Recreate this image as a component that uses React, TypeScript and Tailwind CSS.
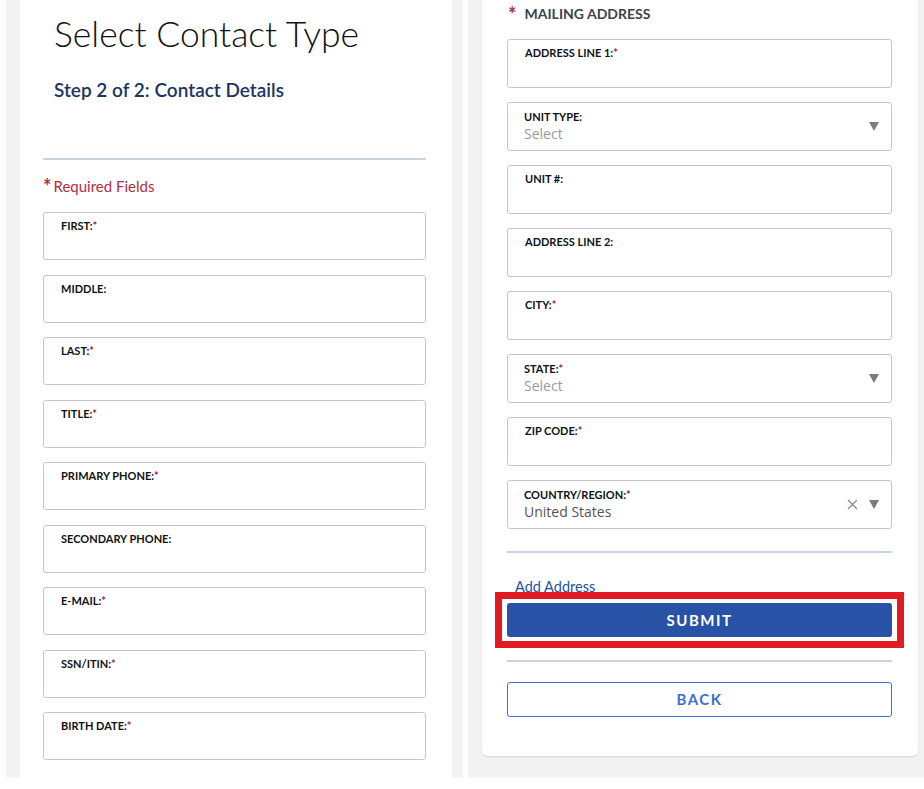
import React from 'react';

const sans = { fontFamily: 'Lato, "Open Sans", "Liberation Sans", sans-serif' };

function Star() {
  return <span className="text-[#9b2455]">*</span>;
}

function Field({ label, required, h = 'h-[48px]' }: { label: string; required?: boolean; h?: string }) {
  return (
    <div className={`rounded-[3px] border border-[#c6c6c6] bg-white px-[17px] pt-[6px] ${h}`}>
      <div className="text-[11px] font-bold uppercase leading-[14px] text-[#111]">
        {label}
        {required && <Star />}
      </div>
    </div>
  );
}

function SelectField({
  label,
  required,
  value,
  placeholder,
  clearable,
}: {
  label: string;
  required?: boolean;
  value?: string;
  placeholder?: string;
  clearable?: boolean;
}) {
  return (
    <div className="flex h-[49px] items-center rounded-[3px] border border-[#c6c6c6] bg-white pl-[16px] pr-[12px]">
      <div className="flex-1">
        <div className="text-[11px] font-bold uppercase leading-[14px] text-[#111]">
          {label}
          {required && <Star />}
        </div>
        <div
          className={`text-[14px] leading-[19px] ${value ? 'text-[#555]' : 'text-[#9a9a9a]'}`}
          style={{ fontFamily: '"Open Sans", Lato, sans-serif' }}
        >
          {value ?? placeholder}
        </div>
      </div>
      {clearable && (
        <svg width="11" height="11" viewBox="0 0 11 11" className="mr-[11px]">
          <path d="M1 1L10 10M10 1L1 10" stroke="#8a8a8a" strokeWidth="1.3" />
        </svg>
      )}
      <svg width="10" height="9" viewBox="0 0 10 9">
        <path d="M0 0H10L5 9Z" fill="#7a7a85" />
      </svg>
    </div>
  );
}

export default function App() {
  const contact = [
    { label: 'First:', required: true },
    { label: 'Middle:' },
    { label: 'Last:', required: true },
    { label: 'Title:', required: true },
    { label: 'Primary Phone:', required: true },
    { label: 'Secondary Phone:' },
    { label: 'E-mail:', required: true },
    { label: 'SSN/ITIN:', required: true },
    { label: 'Birth Date:', required: true },
  ];

  return (
    <div className="min-h-screen bg-white" style={sans}>
      <div className="flex h-[778px]">
        {/* left column */}
        <div className="ml-[6px] w-[457px] bg-[#f3f3f3] pl-[14px] pr-[11px]">
          <div className="h-full bg-white pl-[23px] pr-[26px]">
            <h1 className="pl-[11px] pt-[13px] text-[35.5px] font-light leading-[42px] text-[#111]">
              Select Contact Type
            </h1>
            <h2 className="pl-[11px] pt-[23px] text-[19px] font-semibold leading-[24px] text-[#1a3564]">
              Step 2 of 2: Contact Details
            </h2>
            <div className="mt-[56px] h-[2px] bg-[#c9d4e0]" />
            <div className="mt-[16px] flex items-center text-[15px] leading-[20px] text-[#b02e3f]">
              <span className="mr-[2px] text-[20px] font-bold leading-[20px]">*</span>Required Fields
            </div>
            <div className="mt-[16px] flex flex-col gap-[14.5px]">
              {contact.map((f) => (
                <Field key={f.label} label={f.label} required={f.required} />
              ))}
            </div>
          </div>
        </div>

        <div className="w-[5px]" />

        {/* right column */}
        <div className="flex-1 bg-[#f3f3f3] pl-[14px] pr-[6px]">
          <div className="h-[756px] rounded-b-[6px] bg-white pl-[25px] pr-[26px] shadow-[0_1px_2px_rgba(0,0,0,0.12)]">
            <div className="flex items-center pt-[5px] text-[14px] font-bold leading-[18px] text-[#3b4352]">
              <span className="ml-[1px] mr-[8px] text-[20px] leading-[18px] text-[#b02e3f]">*</span>
              MAILING ADDRESS
            </div>
            <div className="mt-[16px] flex flex-col gap-[14px]">
              <Field label="Address Line 1:" required h="h-[49px]" />
              <SelectField label="Unit Type:" placeholder="Select" />
              <Field label="Unit #:" h="h-[49px]" />
              <Field label="Address Line 2:" h="h-[49px]" />
              <Field label="City:" required h="h-[49px]" />
              <SelectField label="State:" required placeholder="Select" />
              <Field label="Zip Code:" required h="h-[49px]" />
              <SelectField label="Country/Region:" required value="United States" clearable />
            </div>
            <div className="mt-[22px] h-[2px] bg-[#c9d4e0]" />
            <div className="mt-[25px] pl-[8px] text-[14.5px] leading-[18px] text-[#2650a0]">Add Address</div>
            <div className="-mx-[12px] -mt-[4px] border-[7px] border-[#e21b23] px-[5px] py-[4px]">
              <button className="h-[34px] w-full rounded-[3px] bg-[#2752a5] text-[15px] font-bold tracking-[1.5px] text-white">
                SUBMIT
              </button>
            </div>
            <div className="mt-[12px] h-[2px] bg-[#c9d4e0]" />
            <button className="mt-[20px] h-[35px] w-full rounded-[3px] border border-[#3c74d6] bg-white text-[15px] font-bold tracking-[1.5px] text-[#3a6fd2]">
              BACK
            </button>
          </div>
        </div>
      </div>
    </div>
  );
}
